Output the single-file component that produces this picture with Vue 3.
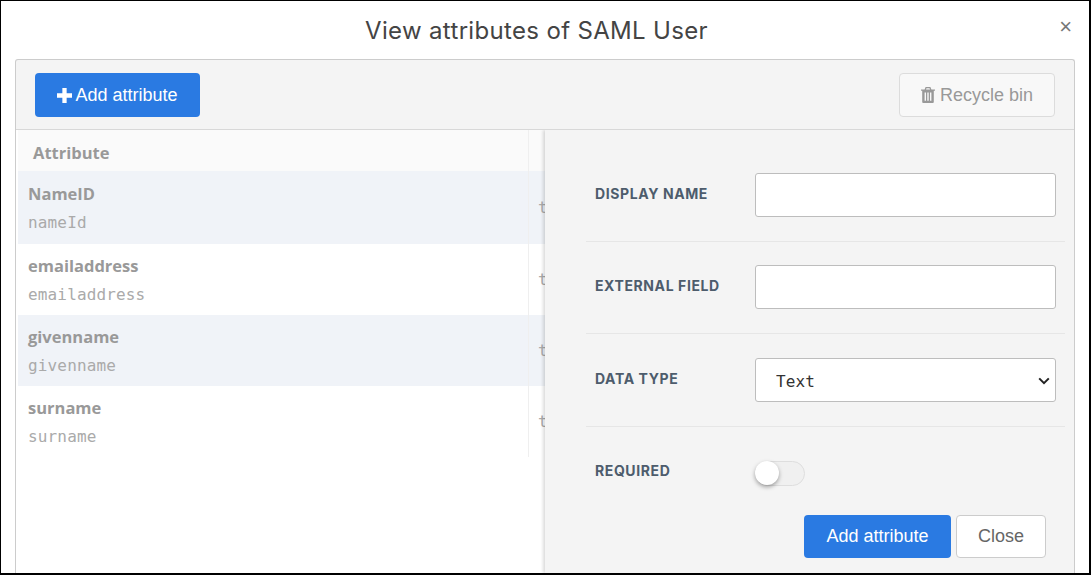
<script setup>
const rows = [
  { name: 'NameID', key: 'nameId', tint: true },
  { name: 'emailaddress', key: 'emailaddress', tint: false },
  { name: 'givenname', key: 'givenname', tint: true },
  { name: 'surname', key: 'surname', tint: false }
]
</script>

<template>
  <div class="modal">
    <header class="head">
      <h1 class="title">View attributes of SAML User</h1>
      <span class="close-x">×</span>
    </header>
    <section class="card">
      <div class="toolbar">
        <button class="btn primary add">
          <svg class="plus" viewBox="0 0 14 14" width="15" height="15"><path d="M5 0h4v5h5v4H9v5H5V9H0V5h5z" fill="#fff"/></svg>
          Add attribute
        </button>
        <button class="btn bin">
          <svg class="trash" viewBox="0 0 14 16" width="14" height="16"><path fill="#999" fill-rule="evenodd" d="M4.6 0h4.8l1 2.4H14v1.4h-1.2V15a1 1 0 0 1-1 1H2.2a1 1 0 0 1-1-1V3.8H0V2.4h3.6zM5 2.4h4l-.5-1.1h-3zM3.6 5.6v8.2h1.4V5.6zm2.7 0v8.2h1.4V5.6zm2.7 0v8.2h1.4V5.6z"/></svg>
          Recycle bin
        </button>
      </div>
      <div class="body">
        <div class="table">
          <div class="thead">
            <div class="cell-main th">Attribute</div>
            <div class="cell-side"></div>
          </div>
          <div v-for="(r, i) in rows" :key="r.key" class="row" :class="{ tint: r.tint, first: i === 0 }">
            <div class="cell-main">
              <div class="name">{{ r.name }}</div>
              <div class="key">{{ r.key }}</div>
            </div>
            <div class="cell-side"><span class="type">text</span></div>
          </div>
        </div>
        <aside class="panel">
          <div class="field">
            <label class="label">Display name</label>
            <input class="control" type="text" />
          </div>
          <div class="field">
            <label class="label">External field</label>
            <input class="control" type="text" />
          </div>
          <div class="field">
            <label class="label">Data type</label>
            <div class="select-wrap">
              <select class="control select"><option>Text</option></select>
              <svg class="chevron" viewBox="0 0 12 8" width="12" height="8"><path d="M1.2 1.4 6 6.2l4.8-4.8" fill="none" stroke="#222" stroke-width="2"/></svg>
            </div>
          </div>
          <div class="field toggle-row">
            <label class="label">Required</label>
            <span class="track"><span class="knob"></span></span>
          </div>
          <div class="actions">
            <button class="btn primary save">Add attribute</button>
            <button class="btn cancel">Close</button>
          </div>
        </aside>
      </div>
    </section>
  </div>
</template>

<style>
html, body { margin: 0; padding: 0; background: #fff; }
</style>

<style scoped>
* { box-sizing: border-box; }
.modal {
  width: 1091px;
  height: 575px;
  border: 1px solid #000;
  border-right-width: 2px;
  border-bottom-width: 2px;
  background: #fff;
  overflow: hidden;
  display: flex;
  flex-direction: column;
  font-family: "Liberation Sans", Arial, sans-serif;
}
.head {
  height: 58px;
  flex: none;
  display: flex;
  align-items: center;
  justify-content: center;
  padding-right: 17px;
  position: relative;
}
.title {
  margin: 0;
  font-family: Inter, sans-serif;
  font-weight: 400;
  font-size: 24px;
  letter-spacing: 0.33px;
  color: #444;
}
.close-x {
  position: absolute;
  right: 17px;
  top: 14px;
  font-size: 22px;
  line-height: 24px;
  color: #777;
}
.card {
  flex: 1;
  margin: 0 14px;
  min-height: 0;
  border: 1px solid #ccc;
  border-bottom: 0;
  border-radius: 3px 3px 0 0;
  background: #f4f4f4;
  display: flex;
  flex-direction: column;
}
.toolbar {
  height: 70px;
  flex: none;
  display: flex;
  justify-content: space-between;
  align-items: flex-start;
  padding: 13px 19px 0;
  border-bottom: 1px solid #d8d8d8;
}
.btn {
  font-family: "Liberation Sans", Arial, sans-serif;
  font-size: 18px;
  border-radius: 4px;
  border: 1px solid transparent;
  cursor: pointer;
  display: inline-flex;
  align-items: center;
  justify-content: center;
  padding: 0;
}
.primary { background: #2a7ae2; color: #fff; }
.add { width: 165px; height: 44px; gap: 3px; }
.bin {
  width: 156px;
  height: 44px;
  gap: 5px;
  background: #f8f8f8;
  border-color: #dcdcdc;
  color: #999;
}
.body {
  flex: 1;
  min-height: 0;
  position: relative;
  background: #fff;
  overflow: hidden;
}
.table {
  padding-left: 2px;
  font-family: "Open Sans", sans-serif;
}
.thead, .row {
  display: grid;
  grid-template-columns: 510px 1fr;
}
.thead { height: 41px; background: #fafafa; }
.th {
  padding: 12px 0 0 15px;
  font-size: 16.5px;
  font-weight: 700;
  line-height: 22px;
  color: #999;
}
.row { height: 71px; }
.row.first { height: 73px; }
.tint { background: #f0f3f8; }
.row .cell-main { padding: 11px 0 0 10px; }
.row.first .cell-main { padding-top: 12px; }
.cell-side {
  border-left: 1px solid #efefef;
  padding-left: 9px;
  display: flex;
  align-items: center;
}
.name {
  font-size: 16.5px;
  font-weight: 700;
  line-height: 22px;
  color: #999;
}
.key, .type {
  font-family: "DejaVu Sans Mono", monospace;
  font-size: 16px;
  letter-spacing: 0.15px;
  line-height: 22px;
  color: #aaa;
}
.key { margin-top: 7px; }
.panel {
  position: absolute;
  left: 529px;
  right: 0;
  top: 0;
  bottom: 0;
  background: #f4f4f4;
  box-shadow: -2px 0 3px rgba(0, 0, 0, 0.14);
  padding: 19px 9px 0 41px;
}
.field {
  display: flex;
  align-items: center;
  padding: 23.75px 9px 23.75px 9px;
  border-bottom: 1px solid #e6e6e6;
}
.label {
  width: 160px;
  flex: none;
  margin-top: -3px;
  font-family: Inter, sans-serif;
  font-size: 14px;
  font-weight: 700;
  letter-spacing: 0.6px;
  text-transform: uppercase;
  color: #4d5c6c;
}
.control {
  width: 301px;
  height: 44px;
  background: #fff;
  border: 1px solid #bdbdbd;
  border-radius: 3px;
  outline: none;
}
.select-wrap {
  position: relative;
  width: 301px;
  height: 44px;
}
.select {
  appearance: none;
  display: block;
  font-family: "DejaVu Sans Mono", monospace;
  font-size: 16px;
  letter-spacing: 0.15px;
  color: #333;
  padding: 3px 0 0 20px;
}
.chevron {
  position: absolute;
  right: 6px;
  top: 19px;
  pointer-events: none;
}
.toggle-row {
  border-bottom: 0;
  padding-top: 34px;
  padding-bottom: 29px;
}
.toggle-row .label { margin-top: -5px; }
.track {
  width: 50px;
  height: 25px;
  border-radius: 13px;
  background: #f0f0f0;
  border: 1px solid #dedede;
  display: flex;
  align-items: center;
}
.knob {
  width: 24px;
  height: 24px;
  margin-left: -1px;
  border-radius: 50%;
  background: #fff;
  box-shadow: 0 2px 4px rgba(0, 0, 0, 0.35);
}
.actions {
  display: flex;
  justify-content: flex-end;
  gap: 5px;
  padding-right: 19px;
}
.save { width: 147px; height: 43px; }
.cancel {
  width: 90px;
  height: 43px;
  background: #fff;
  border-color: #ccc;
  color: #666;
}
</style>
